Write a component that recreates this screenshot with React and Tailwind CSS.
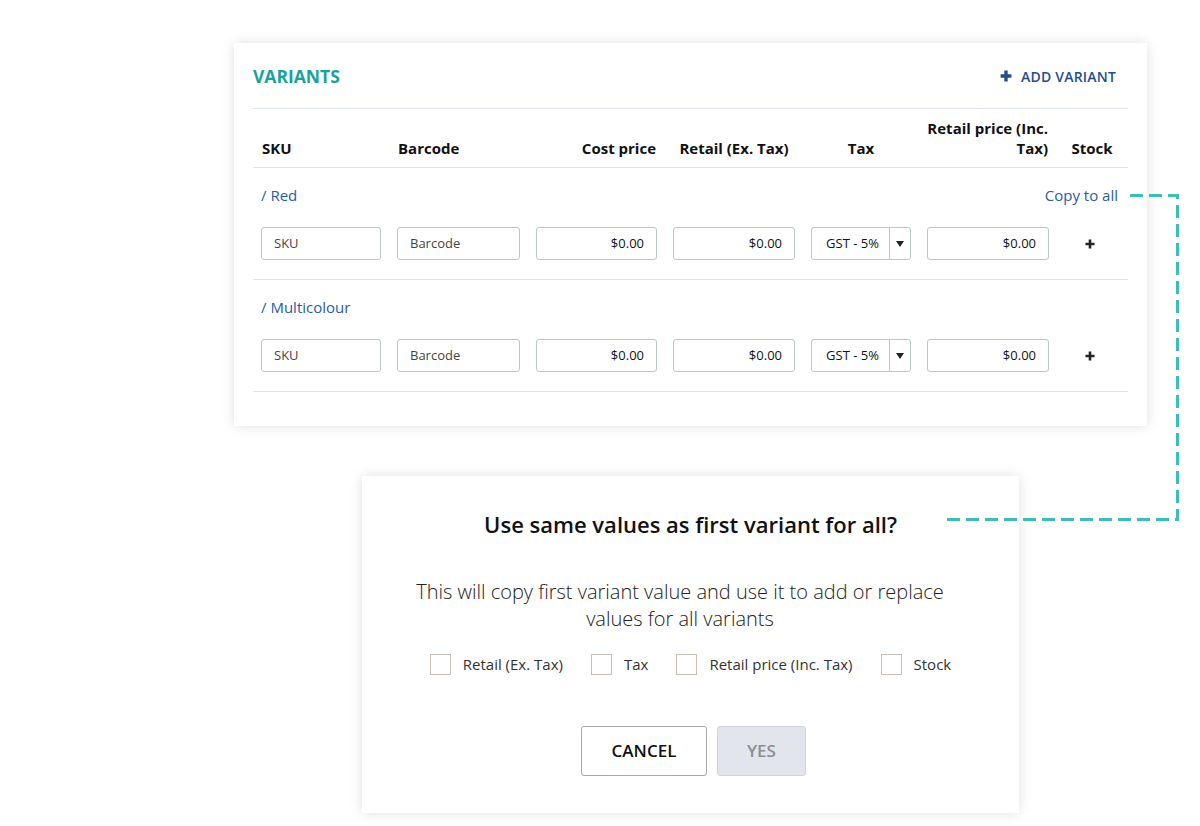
import React from "react";

const cols = "grid grid-cols-[136px_139px_137px_138px_116px_138px_1fr]";

const PlusIcon = ({ size = 10, color = "#222", stroke = 2.6 }) => (
  <svg width={size} height={size} viewBox="0 0 10 10">
    <path d="M5 0.5V9.5M0.5 5H9.5" stroke={color} strokeWidth={stroke} />
  </svg>
);

const Field = ({ placeholder, value, right }) => (
  <div
    className={`h-[33px] border border-[#b9c9c6] rounded-[3px] flex items-center px-3 text-[13px] ${
      right ? "justify-end text-[#111]" : "text-[#444]"
    }`}
  >
    {value || placeholder}
  </div>
);

const TaxSelect = () => (
  <div className="h-[33px] border border-[#b9c9c6] rounded-[3px] flex text-[13px] text-[#111]">
    <div className="flex-1 flex items-center justify-center pl-1">GST - 5%</div>
    <div className="w-[21px] border-l border-[#b9c9c6] flex items-center justify-center">
      <svg width="8" height="6" viewBox="0 0 8 6">
        <path d="M0 0H8L4 6Z" fill="#222" />
      </svg>
    </div>
  </div>
);

const VariantRow = ({ name, copy }) => (
  <div className="border-b border-[#dde3e6] pt-[17px] pb-[19px]">
    <div className="flex justify-between pl-2 pr-[10px] h-5 items-center text-[15px] text-[#2a5ca8]">
      <span>/ {name}</span>
      {copy && <span>Copy to all</span>}
    </div>
    <div className={`${cols} mt-[22px]`}>
      <div className="px-2"><Field placeholder="SKU" /></div>
      <div className="px-2"><Field placeholder="Barcode" /></div>
      <div className="px-2"><Field value="$0.00" right /></div>
      <div className="px-2"><Field value="$0.00" right /></div>
      <div className="px-2"><TaxSelect /></div>
      <div className="px-2"><Field value="$0.00" right /></div>
      <div className="pl-2 pr-[14px] flex items-center justify-center">
        <PlusIcon />
      </div>
    </div>
  </div>
);

const Check = ({ label }) => (
  <div className="flex items-center gap-3">
    <div className="w-[21px] h-[21px] border border-[#c8bfb5]" />
    <span className="text-[15px] text-[#333]">{label}</span>
  </div>
);

export default function App() {
  return (
    <div
      className="relative w-[1200px] h-[826px] bg-white overflow-hidden"
      style={{ fontFamily: '"Open Sans", "Liberation Sans", sans-serif' }}
    >
      <div className="ml-[234px] mt-[43px] w-[913px] bg-white shadow-[0_0_12px_rgba(0,0,0,0.13)] px-[19px] pt-[19px] pb-[34px]">
        <div className="flex justify-between items-center h-7 border-b border-[#dde3e6] box-content pb-[18px]">
          <h2 className="text-[17.5px] font-bold text-[#17a39b]">VARIANTS</h2>
          <button className="flex items-center gap-[9px] pr-3 text-[14px] font-semibold text-[#1f4e8c] tracking-[0.2px]">
            <PlusIcon size={12} color="#1f4e8c" stroke={2.8} />
            ADD VARIANT
          </button>
        </div>

        <div className={`${cols} items-end py-[9px] border-b border-[#dde3e6] text-[15px] font-bold text-[#111] leading-5`}>
          <div className="px-2 pl-[9px]">SKU</div>
          <div className="px-2 pl-[9px]">Barcode</div>
          <div className="pl-2 pr-[9px] text-right">Cost price</div>
          <div className="px-2 text-center">Retail (Ex. Tax)</div>
          <div className="px-2 text-center">Tax</div>
          <div className="px-2 text-right pr-[9px]">
            Retail price (Inc.
            <br />
            Tax)
          </div>
          <div className="pl-2 pr-[9px] text-center">Stock</div>
        </div>

        <VariantRow name="Red" copy />
        <VariantRow name="Multicolour" />
      </div>

      <div className="ml-[362px] mt-[50px] w-[657px] bg-white shadow-[0_0_12px_rgba(0,0,0,0.13)] pt-[34px] pb-[37px] flex flex-col items-center">
        <h3 className="text-[22px] leading-7 font-semibold text-[#111]">
          Use same values as first variant for all?
        </h3>
        <p className="mt-[40px] mr-[21px] w-[540px] text-center text-[20px] leading-[27px] font-light text-[#222]">
          This will copy first variant value and use it to add or replace values for all variants
        </p>
        <div className="mt-[21px] flex items-center gap-[28px]">
          <Check label="Retail (Ex. Tax)" />
          <Check label="Tax" />
          <Check label="Retail price (Inc. Tax)" />
          <Check label="Stock" />
        </div>
        <div className="mt-[50px] ml-[6px] flex gap-[10px]">
          <button className="w-[126px] h-[50px] border border-[#a9a9a9] rounded-[3px] bg-white text-[17px] font-semibold text-[#111]">
            CANCEL
          </button>
          <button className="w-[89px] h-[50px] border border-[#d0d4da] rounded-[3px] bg-[#e2e6ec] text-[17px] font-semibold text-[#8a8e94]">
            YES
          </button>
        </div>
      </div>

      <svg
        className="absolute left-0 top-0 pointer-events-none"
        width="1200"
        height="826"
      >
        <path
          d="M1130 195.5H1177.5V519.5H943"
          fill="none"
          stroke="#36c0b8"
          strokeWidth="3"
          strokeDasharray="13 6"
        />
      </svg>
    </div>
  );
}
